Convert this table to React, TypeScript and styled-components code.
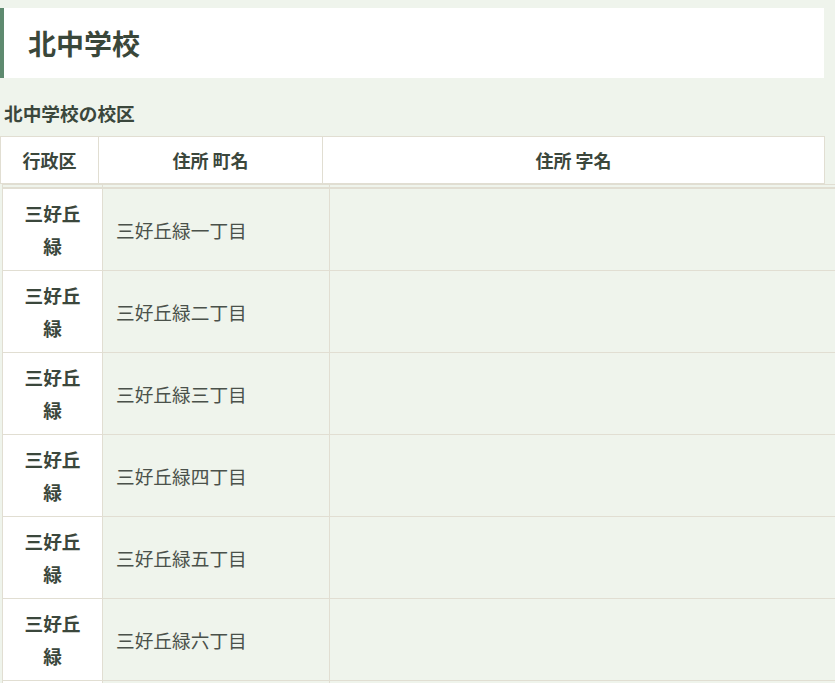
import styled, { createGlobalStyle } from "styled-components";

const GlobalStyle = createGlobalStyle`
  html, body {
    margin: 0;
    padding: 0;
    background: #eff4ec;
    font-family: "Noto Sans CJK JP", "Noto Sans", sans-serif;
    color: #3b473c;
  }
  #root {
    overflow: hidden;
  }
`;

const Page = styled.div`
  width: 835px;
  height: 683px;
  overflow: hidden;
  padding-top: 8px;
  box-sizing: border-box;
`;

const TitleBox = styled.div`
  width: 824px;
  height: 70px;
  box-sizing: border-box;
  background: #ffffff;
  border-left: 4px solid #5e8a6f;
  display: flex;
  align-items: center;
  padding-left: 24px;
`;

const Title = styled.h1`
  margin: 0;
  font-size: 28px;
  font-weight: 700;
  color: #3a473a;
`;

const SubTitle = styled.h2`
  margin: 0;
  padding: 24px 0 0 4px;
  height: 58px;
  line-height: 22px;
  box-sizing: border-box;
  font-size: 18.7px;
  font-weight: 700;
  color: #3b473c;
`;

const HeadTable = styled.table`
  width: 824px;
  border-collapse: collapse;
  table-layout: fixed;
  background: #ffffff;
`;

const HeadCell = styled.th<{ $w: number }>`
  width: ${(p) => p.$w}px;
  height: 47px;
  box-sizing: border-box;
  border: 1.5px solid #e1ded2;
  font-size: 18px;
  font-weight: 700;
  color: #3b473c;
  text-align: center;
  padding: 0;
`;

const BodyWrap = styled.div`
  width: 835px;
  overflow: hidden;
  padding-left: 2px;
  box-sizing: border-box;
`;

const BodyTable = styled.table`
  width: 850px;
  border-collapse: collapse;
  table-layout: fixed;
`;

const Spacer = styled.td<{ $w?: number }>`
  width: ${(p) => (p.$w ? `${p.$w}px` : "auto")};
  height: 2px;
  padding: 0;
  border: 1.5px solid #e1ded2;
  border-bottom-width: 2px;
`;

const Row = styled.tr`
  height: 82px;
`;

const WardCell = styled.td`
  box-sizing: border-box;
  background: #ffffff;
  border: 1.5px solid #e1ded2;
  padding: 0 18px;
  text-align: center;
  font-size: 18.7px;
  font-weight: 700;
  line-height: 33px;
  color: #3b473c;
`;

const TownCell = styled.td`
  box-sizing: border-box;
  background: #eff4ec;
  border: 1.5px solid #e1ded2;
  padding: 0 13px;
  font-size: 18.7px;
  font-weight: 400;
  color: #4a514a;
`;

const towns = [
  "三好丘緑一丁目",
  "三好丘緑二丁目",
  "三好丘緑三丁目",
  "三好丘緑四丁目",
  "三好丘緑五丁目",
  "三好丘緑六丁目",
];

export default function App() {
  return (
    <Page>
      <GlobalStyle />
      <TitleBox>
        <Title>北中学校</Title>
      </TitleBox>
      <SubTitle>北中学校の校区</SubTitle>
      <HeadTable>
        <thead>
          <tr>
            <HeadCell $w={98}>行政区</HeadCell>
            <HeadCell $w={224}>住所 町名</HeadCell>
            <HeadCell $w={502}>住所 字名</HeadCell>
          </tr>
        </thead>
      </HeadTable>
      <BodyWrap>
        <BodyTable>
          <tbody>
            <tr>
              <Spacer $w={99} />
              <Spacer $w={226} />
              <Spacer />
            </tr>
            {towns.map((t) => (
              <Row key={t}>
                <WardCell>三好丘緑</WardCell>
                <TownCell>{t}</TownCell>
                <TownCell></TownCell>
              </Row>
            ))}
            <Row>
              <WardCell />
              <TownCell />
              <TownCell />
            </Row>
          </tbody>
        </BodyTable>
      </BodyWrap>
    </Page>
  );
}
